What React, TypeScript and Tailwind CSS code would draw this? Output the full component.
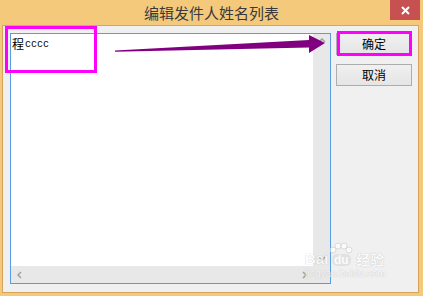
import React from "react";

function Btn({ label }: { label: string }) {
  return (
    <div className="w-[76px] h-[22px] border border-[#adadad] bg-[linear-gradient(#f0f0f0,#e5e5e5)] flex items-center justify-center text-[12px] text-black leading-none [font-family:'Noto_Sans_CJK_SC',sans-serif]">
      {label}
    </div>
  );
}

export default function App() {
  return (
    <div className="relative w-[423px] h-[296px] bg-[#f4c97c] flex flex-col overflow-hidden [font-family:'Noto_Sans_CJK_SC',sans-serif]">
      {/* title bar */}
      <div className="relative h-[25px] shrink-0 flex items-center justify-center">
        <span className="text-[15px] leading-none text-[#3a3a3a] mt-[-1px]">编辑发件人姓名列表</span>
        <div className="absolute right-[3px] top-0 w-[30px] h-[20px] bg-[#c75050] flex items-center justify-center">
          <svg width="9" height="9" viewBox="0 0 9 9">
            <path d="M1 1L8 8M8 1L1 8" stroke="#fff" strokeWidth="2" />
          </svg>
        </div>
      </div>
      {/* client */}
      <div className="ml-[2px] mr-[4px] mb-[3px] flex-1 border border-[#d6a45a] bg-[#f0f0f0] flex pt-[7px] pl-[7px] gap-[5px]">
        {/* list box */}
        <div className="w-[321px] h-[251px] border border-[#569de5] bg-white flex flex-col">
          <div className="flex-1 flex">
            <div className="flex-1 pl-[1px] pt-[2px]">
              <div className="flex items-end h-[14px]">
                <span className="text-[12px] leading-none text-black">程</span>
                <span className="text-[10px] leading-none text-black [font-family:'Liberation_Mono',monospace] ml-[1px]">cccc</span>
              </div>
            </div>
            <div className="w-[17px] bg-[#e8e8e8] flex flex-col items-center justify-between pt-[4px] pb-[5px]">
              <svg width="8" height="5" viewBox="0 0 8 5">
                <path d="M1 4L4 1L7 4" stroke="#a0a0a0" strokeWidth="1.5" fill="none" />
              </svg>
              <svg width="8" height="5" viewBox="0 0 8 5">
                <path d="M1 1L4 4L7 1" stroke="#a0a0a0" strokeWidth="1.5" fill="none" />
              </svg>
            </div>
          </div>
          <div className="h-[17px] flex">
            <div className="flex-1 bg-[#e8e8e8] flex items-center justify-between px-[6px]">
              <svg width="5" height="8" viewBox="0 0 5 8">
                <path d="M4 1L1 4L4 7" stroke="#a0a0a0" strokeWidth="1.5" fill="none" />
              </svg>
              <svg width="5" height="8" viewBox="0 0 5 8">
                <path d="M1 1L4 4L1 7" stroke="#a0a0a0" strokeWidth="1.5" fill="none" />
              </svg>
            </div>
            <div className="w-[17px] bg-[#e8e8e8]" />
          </div>
        </div>
        {/* buttons */}
        <div className="flex flex-col gap-[9px] pt-[0px]">
          <Btn label="确定" />
          <Btn label="取消" />
        </div>
      </div>

      {/* annotations */}
      <div className="absolute left-[5px] top-[26px] w-[92px] h-[47px] border-[3px] border-[#ff00ff]" />
      <div className="absolute left-[337px] top-[31px] w-[75px] h-[25px] border-[3px] border-[#ff00ff]" />
      <svg className="absolute left-0 top-0" width="423" height="296" viewBox="0 0 423 296">
        <polygon points="115,50.5 309,40 309,35 325,43 309,53 309,47.5 115,51.8" fill="#800080" />
      </svg>

      {/* watermark */}
      <div className="absolute left-[305px] top-[242px] flex flex-col items-start pointer-events-none opacity-70">
        <div className="flex items-end gap-[1px]">
          <span className="text-[15px] leading-none font-bold text-white [font-family:'Liberation_Sans',sans-serif] [text-shadow:0_0_1px_#999]">Bai</span>
          <div className="flex flex-col items-center">
            <svg width="24" height="12" viewBox="0 0 24 12">
              <circle cx="4" cy="8" r="3" fill="#fff" stroke="#bbb" strokeWidth="0.6" />
              <circle cx="9" cy="4" r="3" fill="#fff" stroke="#bbb" strokeWidth="0.6" />
              <circle cx="15" cy="4" r="3" fill="#fff" stroke="#bbb" strokeWidth="0.6" />
              <circle cx="20" cy="8" r="3" fill="#fff" stroke="#bbb" strokeWidth="0.6" />
            </svg>
            <span className="text-[12px] leading-none font-bold text-white bg-[#dcdcdc] rounded-[5px] px-[2px] [font-family:'Liberation_Sans',sans-serif]">du</span>
          </div>
          <span className="text-[14px] leading-none font-bold text-white ml-[2px] [text-shadow:0_0_1px_#999]">经验</span>
        </div>
        <span className="text-[10px] leading-none text-white mt-[3px] [font-family:'Liberation_Sans',sans-serif] [text-shadow:0_0_1px_#999]">jingyan.baidu.com</span>
      </div>
    </div>
  );
}
